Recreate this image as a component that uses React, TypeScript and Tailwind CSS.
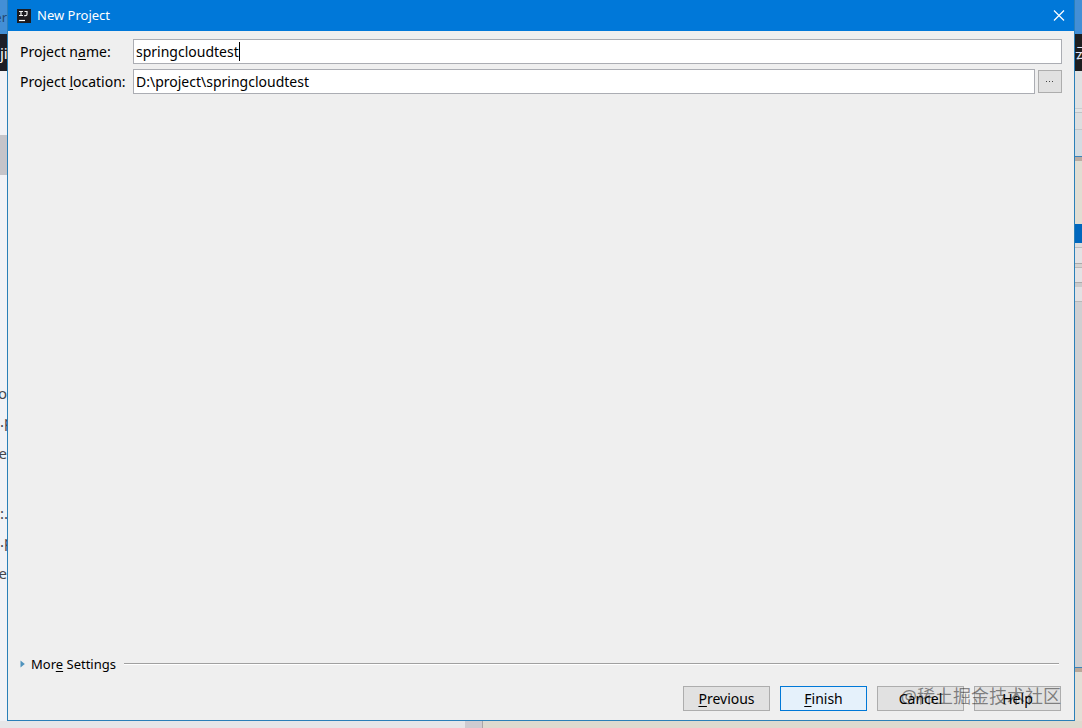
import { useState } from "react";
import type { ReactNode } from "react";

function Key({ children }: { children: string }) {
  return <span className="underline decoration-1 underline-offset-2">{children}</span>;
}

function AppIcon() {
  return (
    <svg viewBox="0 0 14 14" className="size-3.5 shrink-0" aria-hidden="true">
      <rect width="14" height="14" fill="#1d1c20" />
      <path d="M2 2.5h4M4 2.5v4M2 6.5h4M7.5 2.5h3M10 2v3.2q0 1.5-1.5 1.5H7.2" fill="none" stroke="#f2f2f2" strokeWidth="1.2" />
      <path d="M2 11.5h6" stroke="#fff" strokeWidth="1.2" />
    </svg>
  );
}

function LeftEdge() {
  return (
    <div className="flex w-[7px] shrink-0 flex-col overflow-hidden bg-[#f1f2f6] text-[15px] leading-5 text-[#44464d]" aria-hidden="true">
      <div className="flex h-[34px] shrink-0 items-center justify-end bg-[#438fd6] text-[13px] text-[#24486f]">er</div>
      <div className="flex h-[37px] shrink-0 items-center bg-[#1d1e26] text-white">ji</div>
      <div className="h-16 shrink-0" />
      <div className="h-10 shrink-0 bg-[#c5c4c9]" />
      <div className="h-[208px] shrink-0" />
      <div className="flex h-7 shrink-0 justify-end">o</div>
      <div className="h-8 shrink-0 whitespace-nowrap">.p</div>
      <div className="flex h-[60px] shrink-0 justify-end">ge</div>
      <div className="h-7 shrink-0 whitespace-nowrap">:.</div>
      <div className="h-8 shrink-0 whitespace-nowrap">.p</div>
      <div className="flex h-10 shrink-0 justify-end">ge</div>
    </div>
  );
}

function RightEdge() {
  return (
    <div className="flex w-[7px] shrink-0 flex-col overflow-hidden bg-[#e2dfd6]" aria-hidden="true">
      <div className="h-[34px] shrink-0 bg-[#438fd6]" />
      <div className="flex h-[37px] shrink-0 items-center bg-[#1d1e20] text-sm text-[#dfe3f5]">云</div>
      <div className="h-[38px] shrink-0 border-b border-[#c9cdd0] bg-[#dfe1e2]" />
      <div className="h-[4px] shrink-0 border-b border-[#bfc3c6] bg-[#e1e3e4]" />
      <div className="h-[17px] shrink-0 border-b border-[#c2c6c9] bg-[#dcdedf]" />
      <div className="h-[27px] shrink-0 border-b border-[#3d82b8] bg-[#d3dce2]" />
      <div className="h-[4px] shrink-0 bg-[#b9aca3]" />
      <div className="h-[63px] shrink-0 bg-[#e0ddd2]" />
      <div className="h-[19px] shrink-0 bg-[#0067bd]" />
      <div className="h-[5px] shrink-0 border-b border-[#bcbcbd] bg-[#dcdcdd]" />
      <div className="h-[16px] shrink-0 border-b border-[#aaaaab] bg-[#e3e2e4]" />
      <div className="h-[4px] shrink-0 border-b border-[#b9b8b8] bg-[#d4d2d0]" />
      <div className="h-[15px] shrink-0 border-b border-[#ababac] bg-[#e3e2e4]" />
      <div className="h-[4px] shrink-0 bg-[#cacacb]" />
      <div className="h-[15px] shrink-0 border-b border-[#b8b8b9] bg-[#e2e1e3]" />
      <div className="grow border-b border-[#3d82b8] bg-[#cfcfd1]" />
      <div className="h-[4px] shrink-0 bg-[#b9a89a]" />
      <div className="h-[49px] shrink-0" />
    </div>
  );
}

function DialogButton({ children, primary = false }: { children: ReactNode; primary?: boolean }) {
  return (
    <button
      type="button"
      className={
        primary
          ? "h-[25px] w-[87px] border border-[#0078d7] bg-[#e5f1fb] text-center leading-[23px] text-black"
          : "h-[25px] w-[87px] border border-[#adadad] bg-[#e1e1e1] text-center leading-[23px] text-black"
      }
    >
      {children}
    </button>
  );
}

const inputClass =
  "h-[25px] min-w-0 grow border border-[#abadb3] bg-white px-0.5 text-sm text-black outline-none";

export default function App() {
  const [name, setName] = useState("springcloudtest");
  const [location, setLocation] = useState("D:\\project\\springcloudtest");

  return (
    <div className="flex h-screen flex-col overflow-hidden bg-[#e2dfd6] font-['Noto_Sans','Noto_Sans_CJK_SC',sans-serif] text-sm text-black">
      <div className="flex min-h-0 grow">
        <LeftEdge />
        <main className="flex min-w-0 grow flex-col border border-t-0 border-[#2a7fb8] bg-[#efefef]">
          <header className="flex h-[31px] shrink-0 items-center bg-[#0078d9] pr-[7px] pl-[9px] text-white">
            <AppIcon />
            <h1 className="ml-1.5 grow text-[13px]">New Project</h1>
            <button type="button" aria-label="Close" className="flex size-4 items-center justify-center">
              <svg viewBox="0 0 12 12" className="size-3" aria-hidden="true">
                <path d="M1 .5l10 10M11 .5L1 10.5" stroke="#fff" strokeWidth="1.2" />
              </svg>
            </button>
          </header>

          <form className="flex flex-col gap-[5px] pt-2 pr-3 pl-3" onSubmit={(e) => e.preventDefault()}>
            <div className="flex items-center">
              <label htmlFor="name" className="w-[113px] shrink-0 whitespace-nowrap">
                Project n<Key>a</Key>me:
              </label>
              <div className="flex h-[25px] min-w-0 grow items-center border border-[#abadb3] bg-white pl-0.5">
                <input
                  id="name"
                  value={name}
                  onChange={(e) => setName(e.target.value)}
                  className="field-sizing-content h-full max-w-full text-sm caret-transparent outline-none"
                />
                <span className="h-[19px] w-px bg-black" aria-hidden="true" />
              </div>
            </div>
            <div className="flex items-center">
              <label htmlFor="location" className="w-[113px] shrink-0 whitespace-nowrap">
                Project <Key>l</Key>ocation:
              </label>
              <input id="location" value={location} onChange={(e) => setLocation(e.target.value)} className={inputClass} />
              <button
                type="button"
                aria-label="Browse"
                className="ml-[3px] flex h-[23px] w-6 shrink-0 items-center justify-center border border-[#adadad] bg-[#e1e1e1]"
              >
                <svg viewBox="0 0 8 2" className="h-0.5 w-2" aria-hidden="true">
                  <path d="M0 .5h1M3 .5h1M6 .5h1" stroke="#444" strokeWidth="1" />
                </svg>
              </button>
            </div>
          </form>

          <div className="grow" />

          <div className="flex h-5 shrink-0 items-center pr-[15px] pl-3">
            <button type="button" className="flex items-center text-[13px] leading-[18px]">
              <svg viewBox="0 0 5 8" className="mr-1.5 h-2 w-[5px]" aria-hidden="true">
                <path d="M.5 .5L4.8 4L.5 7.5z" fill="#4f93bd" />
              </svg>
              <span>
                Mor<Key>e</Key> Settings
              </span>
            </button>
            <div className="ml-2 h-0.5 grow border-t border-[#a0a0a0] bg-white" />
          </div>

          <footer className="relative flex shrink-0 justify-end gap-2.5 pt-3 pr-[13px] pb-[9px]">
            <DialogButton>
              <Key>P</Key>revious
            </DialogButton>
            <DialogButton primary>
              <Key>F</Key>inish
            </DialogButton>
            <DialogButton>Cancel</DialogButton>
            <DialogButton>Help</DialogButton>
            <span className="pointer-events-none absolute top-2.5 right-[13px] text-lg leading-6 whitespace-nowrap text-black/45">
              @稀土掘金技术社区
            </span>
          </footer>
        </main>
        <RightEdge />
      </div>
      <div className="flex h-[7px] shrink-0" aria-hidden="true">
        <div className="w-[43%] bg-[#e6e6e8]" />
        <div className="w-[18px] border-r border-[#a9a6a8] bg-[#cfcbd0]" />
        <div className="grow bg-[#dedacf]" />
      </div>
    </div>
  );
}
